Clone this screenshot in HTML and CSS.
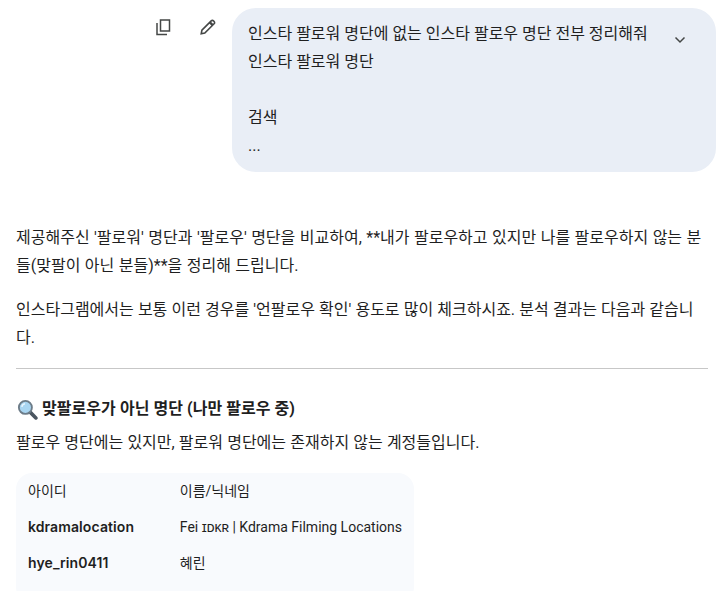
FILE: index.html
```html
<!DOCTYPE html>
<html lang="ko">
<head>
<meta charset="utf-8">
<title>Chat</title>
<link rel="stylesheet" href="styles.css">
</head>
<body>
<div class="user-row">
  <div class="actions">
    <svg class="icon" viewBox="0 0 20 20"><path d="M6.5 3h9v11h-9z M3 6v11.5h10" fill="none" stroke="#444746" stroke-width="1.5"/></svg>
    <svg class="icon" viewBox="0 0 20 20"><path d="M3.2 16.8l.7-3.6 9.3-9.3a1.6 1.6 0 0 1 2.3 0l.6.6a1.6 1.6 0 0 1 0 2.3l-9.3 9.3z" fill="none" stroke="#444746" stroke-width="1.6"/><path d="M11.8 5.3l2.9 2.9" stroke="#444746" stroke-width="2.4"/></svg>
  </div>
  <div class="bubble">
    <div class="bubble-text">
      <p>인스타 팔로워 명단에 없는 인스타 팔로우 명단 전부 정리해줘</p>
      <p>인스타 팔로워 명단</p>
      <p class="blank">&nbsp;</p>
      <p>검색</p>
      <p>...</p>
    </div>
    <svg class="chevron" viewBox="0 0 12 8"><path d="M1.5 1.5L6 6l4.5-4.5" fill="none" stroke="#444746" stroke-width="1.5"/></svg>
  </div>
</div>
<main class="answer">
  <p class="para intro">제공해주신 '팔로워' 명단과 '팔로우' 명단을 비교하여, **내가 팔로우하고 있지만 나를 팔로우하지 않는 분들(맞팔이 아닌 분들)**을 정리해 드립니다.</p>
  <p class="para note">인스타그램에서는 보통 이런 경우를 '언팔로우 확인' 용도로 많이 체크하시죠. 분석 결과는 다음과 같습니다.</p>
  <hr class="rule">
  <h2 class="heading">
    <svg class="lens" viewBox="0 0 20 20"><path d="M12.5 12.5l5.5 5.5" stroke="#4a5560" stroke-width="3.4" stroke-linecap="round"/><circle cx="8" cy="8" r="6.2" fill="#a9d6f2" stroke="#6d7c88" stroke-width="1.8"/><path d="M4.6 7.5a3.6 3.6 0 0 1 3-3" fill="none" stroke="#e8f6ff" stroke-width="1.4"/></svg>
    <span>맞팔로우가 아닌 명단 (나만 팔로우 중)</span>
  </h2>
  <p class="para lead">팔로우 명단에는 있지만, 팔로워 명단에는 존재하지 않는 계정들입니다.</p>
  <div class="table-wrap">
    <table class="table">
      <thead><tr><th>아이디</th><th>이름/닉네임</th></tr></thead>
      <tbody>
        <tr><td><b>kdramalocation</b></td><td>Fei ɪᴅᴋʀ | Kdrama Filming Locations</td></tr>
        <tr><td><b>hye_rin0411</b></td><td>혜린</td></tr>
      </tbody>
    </table>
  </div>
</main>
</body>
</html>
```
FILE: styles.css
```css
html, body {
  margin: 0;
  height: 591px;
  overflow: hidden;
  background: #fff;
}
body {
  font-family: Roboto, "Noto Sans CJK KR", sans-serif;
  font-size: 16px;
  line-height: 28px;
  color: #1f1f1f;
}
p { margin: 0; }
.user-row {
  display: flex;
  justify-content: flex-end;
  align-items: flex-start;
  padding: 8px 6px 0 0;
}
.actions {
  display: flex;
  gap: 24px;
  padding: 9px 14px 0 0;
}
.icon { width: 20px; height: 20px; display: block; }
.bubble {
  width: 484px;
  height: 164px;
  box-sizing: border-box;
  background: #e9eef6;
  border-radius: 24px;
  padding: 12px 16px 8px;
  display: flex;
  justify-content: space-between;
}
.bubble-text { width: 410px; white-space: nowrap; }
.chevron { width: 12px; height: 8px; margin: 16px 14px 0 0; }
.answer { padding: 52px 14px 0 16px; }
.para { margin-bottom: 16px; }
.intro { word-spacing: 0.5px; }
.note { word-spacing: 0.15px; }
.rule {
  border: 0;
  border-top: 1px solid #c7c7c7;
  margin: 16px 0 0;
}
.heading {
  display: flex;
  align-items: center;
  gap: 4px;
  margin: 26px 0 0;
  font-size: 16px;
  line-height: 28px;
  font-weight: 700;
  letter-spacing: 0.05px;
}
.lens { width: 21px; height: 21px; margin-left: 1px; }
.lead { margin: 6px 0 16px; word-spacing: 0.2px; }
.table-wrap {
  width: 398px;
  background: #f8fafd;
  border-radius: 16px;
  margin-top: 16px;
  height: 130px;
}
.table { border-collapse: collapse; font-size: 14px; line-height: 20px; }
.table th, .table td {
  padding: 8px 12px;
  height: 20px;
  text-align: left;
  font-weight: 400;
  white-space: nowrap;
}
.table th:first-child, .table td:first-child { width: 129px; }
.table td + td, .table th + th { padding-left: 14px; }
.table b { font-family: Inter, "Noto Sans CJK KR", sans-serif; font-weight: 600; letter-spacing: 0.1px; line-height: 0; }
```
